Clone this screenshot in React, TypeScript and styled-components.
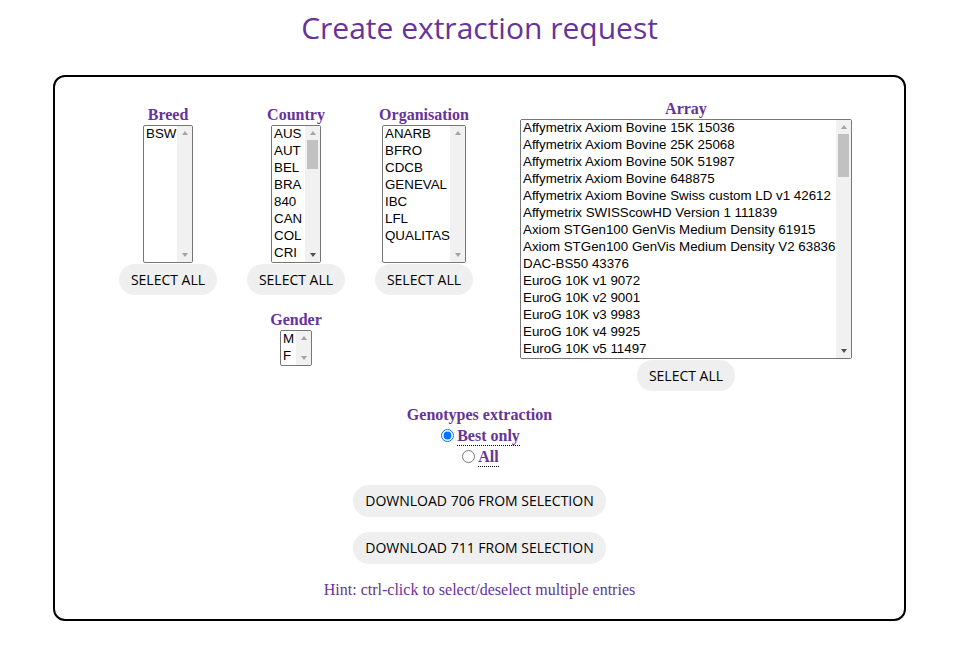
import { FC } from 'react';
import styled, { createGlobalStyle } from 'styled-components';

const Global = createGlobalStyle`
body{
  margin: 0;
  background: #fff;
  font-family: "Liberation Serif", serif;
}
`

const purple = '#663399'
const ROW = 17
const BTN = 14

const Title = styled.h1`
margin: 0;
padding-top: 7px;
text-align: center;
font: 400 30px/42px "Open Sans", sans-serif;
color: ${purple};
`

const Card = styled.main`
width: 853px;
box-sizing: border-box;
margin: 26px 0 0 53px;
border: 2px solid #000;
border-radius: 12px;
padding: 23px 0 20px;
`

const Filters = styled.div`
display: flex;
align-items: flex-start;
padding-left: 64px;
gap: 47px;
`

const SmallGrid = styled.div`
display: grid;
grid-template-columns: repeat(3, 98px);
column-gap: 30px;
row-gap: 16px;
margin-top: 6px;
`

const Column = styled.div<{ $col?: number }>`
display: flex;
flex-direction: column;
align-items: center;
grid-column: ${(p) => p.$col ?? 'auto'};
`

const Label = styled.div`
font: 700 16px/18px "Liberation Serif", serif;
color: ${purple};
margin-bottom: 1px;
white-space: nowrap;
`

const ListFrame = styled.div`
position: relative;
display: flex;
margin-bottom: 1px;
`

const List = styled.select<{ $w: number }>`
width: ${(p) => p.$w}px;
box-sizing: border-box;
overflow-y: scroll;
font: 13.33px "Liberation Sans", Arial, sans-serif;
color: #000;
margin: 0;
padding: 0 15px 0 0;
border: 1px solid #767676;
border-radius: 2px;
outline: none;
option{
  line-height: 16px;
  padding: 0 2px 1px;
}
`

/* the native scrollbar is hidden in the screenshot browser, so draw it over the list */
const Scrollbar = styled.div`
position: absolute;
top: 1px;
right: 1px;
bottom: 1px;
width: 15px;
background: #f1f1f1;
display: flex;
flex-direction: column;
pointer-events: none;
border-radius: 0 1px 1px 0;
`

const Arrow = styled.div<{ $down?: boolean, $on?: boolean }>`
height: ${BTN}px;
flex: none;
display: flex;
align-items: center;
justify-content: center;
&::after{
  content: '';
  border-left: 3.5px solid transparent;
  border-right: 3.5px solid transparent;
  ${(p) => p.$down ? 'border-top' : 'border-bottom'}: 4px solid ${(p) => p.$on ? '#505050' : '#a3a3a3'};
}
`

const Track = styled.div`
flex: 1;
position: relative;
`

const Thumb = styled.div`
position: absolute;
left: 2px;
right: 2px;
top: 0;
background: #c1c1c1;
`

const Pill = styled.button`
border: none;
border-radius: 16px;
background: #efefef;
color: #000;
font: 400 14px/19px "Open Sans", sans-serif;
text-transform: uppercase;
white-space: nowrap;
padding: 6px 12px;
cursor: pointer;
`

const Extraction = styled.section`
display: flex;
flex-direction: column;
align-items: center;
margin-top: 15px;
`

const RadioRow = styled.label`
display: flex;
align-items: center;
height: 21px;
font: 700 16px/18px "Liberation Serif", serif;
color: ${purple};
input{
  margin: 0 3px 0 2px;
  width: 13px;
  height: 13px;
}
span{
  border-bottom: 1px dotted #000;
  margin-top: 2px;
}
`

const Downloads = styled.div`
display: flex;
flex-direction: column;
align-items: center;
gap: 15px;
margin-top: 18px;
button{ padding: 6px 12px 7px; }
`

const Hint = styled.p`
margin: 17px 0 0;
text-align: center;
font: 400 16px/18px "Liberation Serif", serif;
color: ${purple};
`

const breeds = ['BSW']
const countries = ['AUS', 'AUT', 'BEL', 'BRA', '840', 'CAN', 'COL', 'CRI', 'CZE', 'DEU', 'DNK', 'ESP', 'EST', 'FIN', 'FRA', 'GBR', 'HRV', 'HUN', 'IRL', 'ISR', 'ITA', 'LUX', 'MEX', 'NLD', 'NOR', 'NZL', 'POL', 'SVN', 'SWE', 'USA']
const orgs = ['ANARB', 'BFRO', 'CDCB', 'GENEVAL', 'IBC', 'LFL', 'QUALITAS']
const arrays = [
  'Affymetrix Axiom Bovine 15K 15036',
  'Affymetrix Axiom Bovine 25K 25068',
  'Affymetrix Axiom Bovine 50K 51987',
  'Affymetrix Axiom Bovine 648875',
  'Affymetrix Axiom Bovine Swiss custom LD v1 42612',
  'Affymetrix SWISScowHD Version 1 111839',
  'Axiom STGen100 GenVis Medium Density 61915',
  'Axiom STGen100 GenVis Medium Density V2 63836',
  'DAC-BS50 43376',
  'EuroG 10K v1 9072',
  'EuroG 10K v2 9001',
  'EuroG 10K v3 9983',
  'EuroG 10K v4 9925',
  'EuroG 10K v5 11497',
  'EuroG 10K v6 11614',
  'EuroG MD 46035',
  'EuroG MD v2 62549',
  'EuroG MD v3 62638',
  'EuroGMD v4 64123',
  'GGP Bovine 100K 95256',
  'GGP Bovine 150K 138892',
  'GGP Bovine 50K 47843',
  'GGP Bovine LD v3 26151',
  'GGP Bovine LD v4 30108',
  'GGP HD 76883',
  'GGP LD 19721',
  'GGP LDv2 8762',
  'Illumina Bovine 3K 2900',
  'Illumina Bovine LD 6909',
  'Illumina BovineHD 777962',
  'Illumina BovineSNP50 v1 54001',
  'Illumina BovineSNP50 v2 54609',
  'Illumina BovineSNP50 v3 53714',
  'Illumina Custom 9K 8553',
  'Illumina Custom LD 9136',
  'Neogen GGP 50K 50905',
  'Neogen GGP 100K 100010',
  'Neogen GGP Bovine 35K 35131',
  'Neogen GGP Bovine 100K v2 101203',
  'Swiss custom LD v2 42812',
  'Swiss custom LD v3 44020',
  'Swiss custom LD v4 45119',
  'Zoetis Clarifide 16K 16052',
  'Zoetis Clarifide 19K 19186',
  'Zoetis Clarifide Plus 27K 27034',
  'Zoetis Clarifide 50K 50233',
  'Zoetis Inguran 10K 10211',
  'Zoetis Inguran 20K 20377',
  'Zoetis i50K 48234',
  'Weatherbys 30K 30412',
  'Weatherbys 50K 50117',
  'VIT custom 5K 5432',
  'VIT custom 10K 10034',
  'VIT custom 20K 20176',
  'USDA LD 6908',
  'USDA 3K 2899',
  'USDA 9K 8762',
  'Genotyping Service 60K 61142',
  'Genotyping Service 80K 80233',
  'ICBF IDB v1 17137',
  'ICBF IDB v2 18004',
  'ICBF IDB v3 53450',
  'GeneSeek 26K 26503',
  'GeneSeek 30K 30105',
  'GeneSeek 77K 76879',
  'GeneSeek HD 139480',
  'Custom SNP panel 200 200',
  'Custom SNP panel 1000 1000',
]

const Picker: FC<{ label: string, items: string[], width: number, size: number, col?: number, selectAll?: boolean }> = (props) => {
  const { label, items, width, size, col, selectAll = true } = props
  const more = items.length > size
  const track = size * ROW - 2 * BTN
  const thumb = more ? Math.round(track * size / items.length) : 0
  return (
    <Column $col={col}>
      <Label>{label}</Label>
      <ListFrame>
        <List multiple size={size} $w={width}>
          {items.map((i) => <option key={i}>{i}</option>)}
        </List>
        <Scrollbar>
          <Arrow />
          <Track>{more && <Thumb style={{ height: thumb }} />}</Track>
          <Arrow $down $on={more} />
        </Scrollbar>
      </ListFrame>
      {selectAll && <Pill>Select all</Pill>}
    </Column>
  )
}

export default function App() {
  return (
    <>
      <Global />
      <Title>Create extraction request</Title>
      <Card>
        <Filters>
          <SmallGrid>
            <Picker label="Breed" items={breeds} width={50} size={8} />
            <Picker label="Country" items={countries} width={50} size={8} />
            <Picker label="Organisation" items={orgs} width={84} size={8} />
            <Picker label="Gender" items={['M', 'F']} width={32} size={2} col={2} selectAll={false} />
          </SmallGrid>
          <Picker label="Array" items={arrays} width={332} size={14} />
        </Filters>
        <Extraction>
          <Label>Genotypes extraction</Label>
          <RadioRow>
            <input type="radio" name="geno" defaultChecked />
            <span>Best only</span>
          </RadioRow>
          <RadioRow>
            <input type="radio" name="geno" />
            <span>All</span>
          </RadioRow>
        </Extraction>
        <Downloads>
          <Pill>Download 706 from selection</Pill>
          <Pill>Download 711 from selection</Pill>
        </Downloads>
        <Hint>Hint: ctrl-click to select/deselect multiple entries</Hint>
      </Card>
    </>
  )
}
